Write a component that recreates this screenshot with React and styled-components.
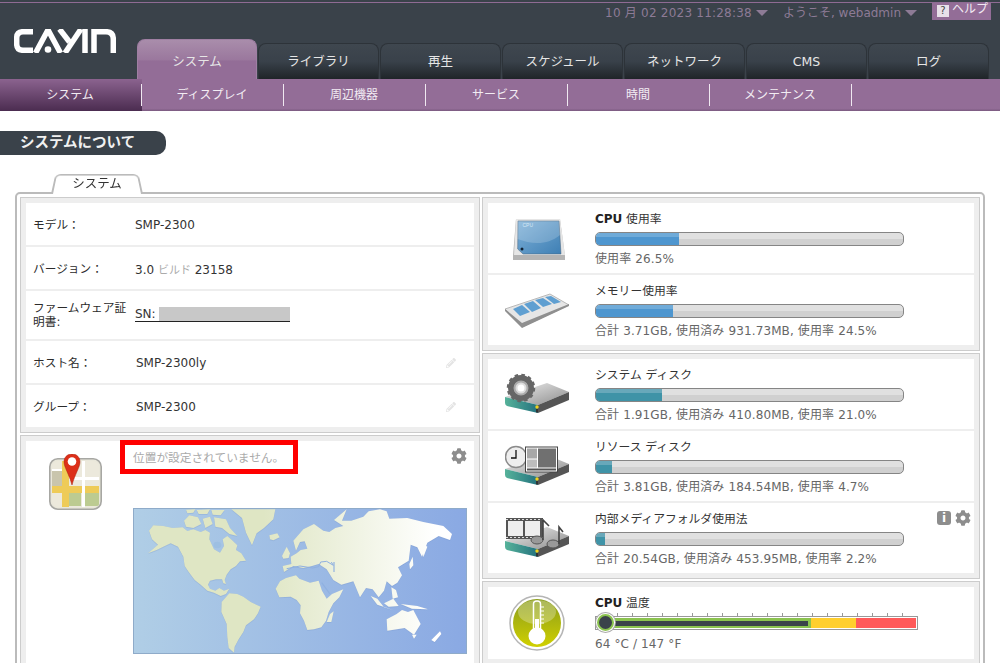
import styled, { createGlobalStyle } from 'styled-components';
import { FaCog, FaPencilAlt } from 'react-icons/fa';

const GlobalStyle = createGlobalStyle`
  html, body {
    margin: 0;
    height: 663px;
    overflow: hidden;
    background: #fff;
    font-family: 'DejaVu Sans', 'Noto Sans CJK JP', sans-serif;
    font-size: 12px;
    color: #333;
  }
`;

const mainTabs = ['システム', 'ライブラリ', '再生', 'スケジュール', 'ネットワーク', 'CMS', 'ログ'];
const subTabs = ['システム', 'ディスプレイ', '周辺機器', 'サービス', '時間', 'メンテナンス'];

function Logo() {
  return (
    <LogoMark viewBox='0 0 102 24' aria-label='CAYIN'>
      <g fill='none' stroke='#fff' strokeWidth='5.5'>
        <path d='M19 2.700H9Q2.700 2.700 2.700 9V15Q2.700 21.300 9 21.300H19' />
        <path d='M21.500 24L33 2.700H35L46.500 24' />
        <path d='M45.500 0L55.500 13' />
        <path d='M67 0L51 24' />
        <path d='M71 0V24' />
        <path d='M80 24V2.700H92Q99.300 2.700 99.300 10V24' />
      </g>
      <circle cx='34' cy='20.500' r='3.300' fill='#fff' />
    </LogoMark>
  );
}

function MapPinIcon() {
  return (
    <svg width='53' height='56' viewBox='0 0 53 56'>
      <rect x='0.800' y='4.800' width='51.400' height='50.400' rx='8' fill='#e9e7da' stroke='#a7a7a3' strokeWidth='1.600' />
      <rect x='3' y='7' width='47' height='46' rx='6' fill='#ece9dc' />
      <path d='M3 17H13V32H3Z' fill='#c9c5ad' />
      <path d='M20 39H32V52H20Z' fill='#bccb91' />
      <path d='M36 39H50V50Q50 52 47 52H36Z' fill='#bccb91' />
      <path d='M3 32H50V39H3Z M13 7H20V53H13Z' fill='#eecb58' />
      <path d='M3 15H13V17H3Z M33 7H36V53H33Z M20 23H50V26H20Z' fill='#fff' />
      <path d='M23 0C18 0 15 3.500 15 8C15 13 20 20 23 31C26 20 31 13 31 8C31 3.500 28 0 23 0Z' fill='#dc2f19' stroke='#a8200f' strokeWidth='0.500' />
      <circle cx='23' cy='7.500' r='4.300' fill='#fff' />
    </svg>
  );
}

function WorldMap() {
  return (
    <MapFrame>
      <svg width='332' height='144' viewBox='12 27 996 432' preserveAspectRatio='none'>
        <defs>
          <linearGradient id='sea' x1='0' x2='1' y1='0' y2='0'>
            <stop offset='0' stopColor='#b0cee6' />
            <stop offset='1' stopColor='#8aa9e3' />
          </linearGradient>
          <linearGradient id='land' gradientUnits='userSpaceOnUse' x1='400' x2='920' y1='0' y2='0'>
            <stop offset='0' stopColor='#dfe6c4' />
            <stop offset='1' stopColor='#ffffff' />
          </linearGradient>
          <filter id='glow' x='-5%' y='-5%' width='110%' height='110%'>
            <feDropShadow dx='0' dy='1' stdDeviation='2' floodColor='#6c8fc4' floodOpacity='0.7' />
          </filter>
        </defs>
        <rect x='12' y='27' width='996' height='432' fill='url(#sea)' />
        <g fill='url(#land)' filter='url(#glow)'>
          <path d='M57 92L70 76L100 78L128 84L158 82L172 93L190 88L212 96L226 90L240 98L238 118L252 148L270 158L282 138L278 118L292 108L308 122L322 136L318 150L334 160L348 182L330 184L318 198L302 208L290 224L284 240L288 252L280 250L276 238L258 238L240 242L234 254L240 266L256 272L268 264L282 272L298 266L288 282L272 288L252 278L232 272L212 254L194 240L176 216L164 198L160 170L144 140L122 130L100 140L80 150L54 160L84 134L66 118Z' />
          <path d='M168 29L196 28L190 38L172 40Z M200 30L240 28L232 42L206 42Z M244 30L284 30L272 46L248 44Z' />
          <path d='M162 62L178 46L204 52L214 72L190 84L168 80Z M218 56L240 50L248 72L226 84Z M252 52L288 58L300 84L322 108L298 102L276 84L256 80Z' />
          <path d='M304 28H436L430 58L402 84L380 100L366 136L348 98L336 54Z' />
          <path d='M418 106L442 100L449 112L430 121L420 118Z' />
          <path d='M275 306L298 280L322 282L340 290L362 306L392 320L384 340L372 358L348 376L340 396L326 418L314 440L312 458L296 444L292 412L290 372L274 336Z' />
          <path d='M437 266L450 244L468 234L498 226L508 236L540 248L566 242L576 272L590 296L606 282L640 268L628 292L610 310L596 336L588 362L574 382L552 388L532 390L522 362L510 340L512 316L500 300L482 290L448 292Z' />
          <path d='M600 342L611 334L604 366L590 366Z' />
          <path d='M462 216L458 198L484 192L482 170L500 160L512 150L532 146L524 124L510 126L498 152L490 122L520 88L552 72L580 92L598 96L616 84L640 78L612 60L650 28L636 62L664 62L700 50L716 34L750 28L770 34L778 56L832 54L880 66L940 78L966 102L960 120L926 108L892 128L876 170L862 142L842 134L836 182L804 202L816 226L802 248L786 258L770 244L762 272L746 292L728 268L708 264L690 292L670 244L634 254L610 240L590 208L566 192L546 198L520 204L490 198Z' />
          <path d='M456 168L470 140L480 160L476 174L460 176Z' />
          <path d='M722 288L742 296L762 322L790 330L742 314Z M762 310L790 296L806 318L776 320Z M812 312L862 318L894 328L846 326Z M784 262L798 270L804 292L788 296Z M838 192L848 170L850 196L840 208Z M876 130L892 140L880 172Z' />
          <path d='M770 358L800 342L816 330L834 336L850 330L872 372L852 404L824 384L772 392Z' />
          <path d='M904 420L930 394L934 402L914 426Z M846 404L860 404L852 416Z' />
        </g>
        <ellipse cx='262' cy='135' rx='12' ry='10' fill='#9dbfe2' />
        <path d='M470 206L510 198L548 204L566 200L572 186L590 184L610 196L604 186' fill='none' stroke='#8fb0e0' strokeWidth='3' />
        <path d='M575 248L600 282 M612 186V216' fill='none' stroke='#8fb0e0' strokeWidth='3.500' />
      </svg>
    </MapFrame>
  );
}

function CpuIcon() {
  return (
    <svg width='64' height='44' viewBox='0 0 64 44'>
      <defs>
        <linearGradient id='chip' x1='0' y1='0' x2='1' y2='1'>
          <stop offset='0' stopColor='#7fb1d8' />
          <stop offset='1' stopColor='#3e7fb4' />
        </linearGradient>
      </defs>
      <path d='M11 3H55L60 40V44H8V40Z' fill='#b4b4b4' />
      <path d='M11 3H55L60 39H9Z' fill='#e6e6e6' />
      <path d='M13 5H54L56 38H18L12.700 33Z' fill='url(#chip)' stroke='#44617a' strokeWidth='0.500' />
      <path d='M13 5H54L55 19C42 30 26 28 12.500 23Z' fill='#fff' opacity='0.18' />
      <circle cx='17' cy='33' r='1.500' fill='#123' />
      <text x='17.500' y='11' fontSize='5' fill='#d6e8f5' fontFamily='Liberation Sans, sans-serif'>CPU</text>
    </svg>
  );
}

function RamIcon() {
  return (
    <svg width='64' height='36' viewBox='0 0 64 36'>
      <path d='M0 17L45 2L64 13L17 35Z' fill='#e6e6e6' stroke='#a9a9a9' strokeWidth='0.800' />
      <path d='M0 17L17 31L64 12V14L17 36L0 19Z' fill='#8f8f8f' />
      <g fill='#5f9fd1'>
        <path d='M8 17L17 13L25 20L15 24Z' />
        <path d='M19 12L28 9L36 16L27 20Z' />
        <path d='M30 8L38 6L47 12L38 15Z' />
        <path d='M40 5L46 4L56 10L49 12Z' />
      </g>
    </svg>
  );
}

function DiskBase() {
  return (
    <>
      <path d='M0 24L42 10L64 19L33 32Z' fill='url(#diskTop)' />
      <path d='M0 24L33 32V40L2 33Q0 32 0 30Z' fill='url(#diskFront)' />
      <path d='M33 32L64 19V27L33 40Z' fill='#555' />
      <circle cx='32' cy='34' r='1.700' fill='#f2d21c' />
      <rect x='31' y='36' width='2' height='3.500' fill='#333' />
    </>
  );
}

function DiskDefs() {
  return (
    <svg width='0' height='0' style={{ position: 'absolute' }}>
      <defs>
        <linearGradient id='diskTop' x1='0' y1='0' x2='1' y2='1'>
          <stop offset='0' stopColor='#f0f0f0' />
          <stop offset='1' stopColor='#8d8d8d' />
        </linearGradient>
        <linearGradient id='diskFront' x1='0' y1='0' x2='1' y2='0'>
          <stop offset='0' stopColor='#56b29a' />
          <stop offset='1' stopColor='#24727e' />
        </linearGradient>
      </defs>
    </svg>
  );
}

function SystemDiskIcon() {
  return (
    <svg width='64' height='42' viewBox='0 0 64 42'>
      <DiskBase />
      <circle cx='16' cy='15' r='10' fill='none' stroke='#666' strokeWidth='6' />
      <circle cx='16' cy='15' r='12.500' fill='none' stroke='#666' strokeWidth='3.500' strokeDasharray='3.400 3.140' />
      <circle cx='16' cy='15' r='6.500' fill='#ddd' stroke='#aaa' strokeWidth='2' />
      <circle cx='16' cy='15' r='3.500' fill='#fff' />
    </svg>
  );
}

function ResourceDiskIcon() {
  return (
    <svg width='64' height='42' viewBox='0 0 64 42'>
      <DiskBase />
      <circle cx='11' cy='12' r='10.500' fill='#eee' stroke='#8b8b8b' strokeWidth='1.500' />
      <path d='M11 5V13H6' fill='none' stroke='#111' strokeWidth='1.300' />
      <rect x='20.500' y='2' width='32' height='25' fill='#fff' stroke='#444' />
      <rect x='22' y='3.500' width='10' height='10' fill='#a8a8a8' />
      <rect x='22' y='14.500' width='10' height='8' fill='#bdbdbd' />
      <rect x='33' y='3.500' width='18' height='19' fill='#707070' />
      <rect x='22' y='23.500' width='29' height='2' fill='#555' />
    </svg>
  );
}

function MediaDiskIcon() {
  return (
    <svg width='64' height='42' viewBox='0 0 64 42'>
      <DiskBase />
      <rect x='1' y='1' width='37' height='21' fill='#555' />
      <rect x='3' y='4' width='15' height='15' fill='#eee' />
      <rect x='20' y='4' width='15' height='15' fill='#eee' />
      <path d='M1 2.500H38 M1 20.500H38' stroke='#ddd' strokeWidth='1' strokeDasharray='2 2' />
      <ellipse cx='32' cy='23' rx='6' ry='4' fill='#999' stroke='#555' />
      <ellipse cx='48' cy='27' rx='6' ry='4' fill='#999' stroke='#555' />
      <path d='M38 23V3L44 9 M54 27V10L58 15' fill='none' stroke='#444' strokeWidth='1.600' />
    </svg>
  );
}

function ThermoIcon() {
  return (
    <svg width='56' height='56' viewBox='0 0 56 56'>
      <defs>
        <linearGradient id='lime' x1='0' y1='0' x2='0' y2='1'>
          <stop offset='0' stopColor='#8a9c1c' />
          <stop offset='1' stopColor='#d0d000' />
        </linearGradient>
      </defs>
      <circle cx='28' cy='28' r='27' fill='#fff' stroke='#b5b5b5' strokeWidth='1.500' />
      <circle cx='28' cy='28' r='24' fill='url(#lime)' />
      <ellipse cx='28' cy='17' rx='19' ry='12' fill='#fff' opacity='0.28' />
      <path d='M24.500 39V9Q24.500 6 28 6Q31.500 6 31.500 9V39' fill='none' stroke='#fff' strokeWidth='1.500' />
      <rect x='26' y='24' width='4' height='18' fill='#fff' />
      <circle cx='28' cy='41' r='8.500' fill='#fff' />
      <path d='M32 12H35M32 16H35M32 20H35M32 24H35M32 28H35' stroke='#fff' />
    </svg>
  );
}

const usageCards = [
  [
    { icon: <CpuIcon />, title: <><b>CPU</b> 使用率</>, value: 26.5, color: 'blue', note: '使用率 26.5%' },
    { icon: <RamIcon />, title: 'メモリー使用率', value: 24.5, color: 'blue', note: '合計 3.71GB, 使用済み 931.73MB, 使用率 24.5%' },
  ],
  [
    { icon: <SystemDiskIcon />, title: 'システム ディスク', value: 21, color: 'teal', note: '合計 1.91GB, 使用済み 410.80MB, 使用率 21.0%' },
    { icon: <ResourceDiskIcon />, title: 'リソース ディスク', value: 4.7, color: 'teal', note: '合計 3.81GB, 使用済み 184.54MB, 使用率 4.7%' },
    { icon: <MediaDiskIcon />, title: '内部メディアフォルダ使用法', value: 2.2, color: 'teal', note: '合計 20.54GB, 使用済み 453.95MB, 使用率 2.2%', actions: true },
  ],
];

function App() {
  return (
    <>
      <GlobalStyle />
      <DiskDefs />
      <Header>
        <TopLine />
        <HeaderBody>
          <Logo />
          <HeaderRight>
            <MetaBar>
              <MetaItem $wide>10 月 02 2023 11:28:38<Caret /></MetaItem>
              <MetaItem>ようこそ, webadmin<Caret /></MetaItem>
              <Help><HelpMark>?</HelpMark>ヘルプ</Help>
            </MetaBar>
            <MainTabs>
              {mainTabs.map((tab, i) => (
                <MainTab key={tab} $active={i === 0}>{tab}</MainTab>
              ))}
            </MainTabs>
          </HeaderRight>
        </HeaderBody>
      </Header>
      <SubNav>
        {subTabs.map((tab, i) => (
          <SubTab key={tab} $active={i === 0}>{tab}</SubTab>
        ))}
      </SubNav>

      <PageTitle>システムについて</PageTitle>
      <TabStrip>
        <PanelTab><span>システム</span></PanelTab>
      </TabStrip>

      <Panel>
        <Column>
          <Card>
            <InfoRow>
              <InfoLabel>モデル：</InfoLabel>
              <span>SMP-2300</span>
            </InfoRow>
            <InfoRow>
              <InfoLabel>バージョン：</InfoLabel>
              <span>3.0 <Faint>ビルド</Faint> 23158</span>
            </InfoRow>
            <InfoRow $tall>
              <InfoLabel>ファームウェア証明書:</InfoLabel>
              <Serial>SN: <Masked /></Serial>
            </InfoRow>
            <InfoRow>
              <InfoLabel>ホスト名：</InfoLabel>
              <EditableValue>SMP-2300ly</EditableValue>
              <EditIcon />
            </InfoRow>
            <InfoRow>
              <InfoLabel>グループ：</InfoLabel>
              <EditableValue>SMP-2300</EditableValue>
              <EditIcon />
            </InfoRow>
          </Card>
          <Card>
            <LocationBody>
              <LocationIcon><MapPinIcon /></LocationIcon>
              <LocationMain>
                <Notice>位置が設定されていません。</Notice>
                <WorldMap />
              </LocationMain>
              <CornerGear />
            </LocationBody>
          </Card>
        </Column>

        <Column>
          {usageCards.map((rows, i) => (
            <Card key={i}>
              {rows.map((row) => (
                <UsageRow key={row.note}>
                  <UsageIcon>{row.icon}</UsageIcon>
                  <div>
                    <UsageTitle>{row.title}</UsageTitle>
                    <Bar>
                      <BarFill $color={row.color} $value={row.value} />
                    </Bar>
                    <UsageNote>{row.note}</UsageNote>
                  </div>
                  {row.actions && (
                    <RowActions>
                      <InfoBadge>i</InfoBadge>
                      <FaCog size={16} />
                    </RowActions>
                  )}
                </UsageRow>
              ))}
            </Card>
          ))}
          <Card>
            <UsageRow $temp>
              <UsageIcon><ThermoIcon /></UsageIcon>
              <div>
                <UsageTitle><b>CPU</b> 温度</UsageTitle>
                <Meter>
                  <MeterGreen><MeterLevel /></MeterGreen>
                  <MeterYellow />
                  <MeterRed />
                  <MeterKnob />
                </Meter>
                <TempNote>64 °C / 147 °F</TempNote>
              </div>
            </UsageRow>
          </Card>
        </Column>
      </Panel>
    </>
  );
}

const Header = styled.header`
  height: 79px;
  background: #3a424a;
`;

const TopLine = styled.div`
  height: 1px;
  border-top: 2px solid #3a424a;
  background: #8f6b94;
`;

const HeaderBody = styled.div`
  display: flex;
  height: 76px;
`;

const LogoMark = styled.svg`
  flex: none;
  width: 102px;
  height: 24px;
  margin: 26px 21px 0 14px;
`;

const HeaderRight = styled.div`
  flex: 1;
  display: flex;
  flex-direction: column;
`;

const MetaBar = styled.div`
  height: 36px;
  display: flex;
  align-items: flex-start;
  justify-content: flex-end;
  padding-right: 9px;
  color: #8d7b96;
  font-size: 12px;
  line-height: 18px;
`;

const MetaItem = styled.div`
  display: flex;
  align-items: center;
  margin-right: 15px;
  padding-top: 1px;
  letter-spacing: ${(p) => (p.$wide ? '0.22px' : '0')};
`;

const Caret = styled.i`
  width: 0;
  height: 0;
  margin-left: 4px;
  border: 6px solid transparent;
  border-top: 6px solid #8d7b96;
  border-bottom: 0;
`;

const Help = styled.div`
  display: flex;
  align-items: flex-start;
  width: 59px;
  height: 17px;
  box-sizing: border-box;
  padding: 0 0 0 5px;
  background: #936d97;
  color: #f1e9f2;
  font-size: 12px;
  line-height: 13px;
`;

const HelpMark = styled.span`
  width: 12px;
  height: 12px;
  margin: 2px 3px 0 0;
  background: #e8e0e9;
  color: #444;
  font-size: 10px;
  line-height: 12px;
  text-align: center;
`;

const MainTabs = styled.nav`
  display: flex;
  align-items: flex-end;
  height: 40px;
`;

const MainTab = styled.div`
  box-sizing: border-box;
  flex: none;
  width: ${(p) => (p.$active ? '120px' : '121px')};
  height: ${(p) => (p.$active ? '40px' : '36px')};
  margin-right: 1px;
  border-radius: 8px 8px 0 0;
  text-align: center;
  font-size: 12.500px;
  line-height: ${(p) => (p.$active ? '44px' : '36px')};
  color: #e6e6e6;
  border: 1px solid ${(p) => (p.$active ? '#9f7fa3' : '#2d3339')};
  border-bottom: 0;
  background: ${(p) =>
    p.$active
      ? 'linear-gradient(#a98dab, #9a779d 52%, #936d97 53%, #936d97)'
      : 'linear-gradient(#3f474f, #39414a 50%, #1f2428)'};
`;

const SubNav = styled.nav`
  display: flex;
  height: 32px;
  background: linear-gradient(#936d97 92%, #7b5a80);
`;

const SubTab = styled.div`
  position: relative;
  box-sizing: border-box;
  width: 142px;
  padding-right: 2px;
  text-align: center;
  font-size: 12px;
  line-height: 32px;
  color: #f2ecf3;
  background: ${(p) => (p.$active ? 'linear-gradient(#8b638f, #4b2c50)' : 'transparent')};
  &::after {
    content: '';
    position: absolute;
    right: 0;
    top: 5px;
    height: 22px;
    width: 1px;
    background: #f0e9f1;
  }
`;

const PageTitle = styled.h1`
  width: 146px;
  height: 24px;
  margin: 20px 0 0;
  padding-left: 20px;
  border-radius: 0 10px 10px 0;
  background: #3a424a;
  color: #f1f1f1;
  font-size: 14.500px;
  font-weight: bold;
  line-height: 23px;
`;

const TabStrip = styled.div`
  height: 20px;
  margin-top: 17px;
  padding-left: 51px;
`;

const PanelTab = styled.div`
  position: relative;
  z-index: 1;
  width: 92px;
  height: 22px;
  text-align: center;
  font-size: 12.500px;
  line-height: 23px;
  span {
    position: relative;
  }
  &::before {
    content: '';
    position: absolute;
    inset: -1px 0 0;
    box-sizing: border-box;
    background: #fff;
    border: 2px solid #bbb;
    border-bottom: 0;
    border-radius: 6px 6px 0 0;
    transform: perspective(60px) rotateX(16deg);
    transform-origin: bottom;
  }
`;

const Panel = styled.main`
  display: grid;
  grid-template-columns: 460px 498px;
  gap: 2px;
  align-items: start;
  box-sizing: border-box;
  width: 970px;
  margin-left: 15px;
  padding: 3px;
  border: 2px solid #bbb;
  border-radius: 5px 5px 0 0;
`;

const Column = styled.div`
  display: flex;
  flex-direction: column;
  gap: 2px;
`;

const Card = styled.section`
  display: flex;
  flex-direction: column;
  gap: 2px;
  padding: 5px;
  background: #eee;
  border: 1px solid #ccc;
`;

const InfoRow = styled.div`
  position: relative;
  display: flex;
  align-items: center;
  box-sizing: border-box;
  height: ${(p) => (p.$tall ? '48px' : '42px')};
  padding: ${(p) => (p.$tall ? '0' : '2px')} 0 0 7px;
  background: #fff;
`;

const InfoLabel = styled.div`
  flex: none;
  width: 97px;
  margin-right: 5px;
  color: #2b2b2b;
  line-height: 14px;
  font-size: 11.700px;
`;

const Faint = styled.span`
  color: #aaa;
  font-size: 11px;
`;

const Serial = styled.span`
  display: flex;
  align-items: flex-end;
  gap: 3px;
  height: 14px;
  margin-top: -1px;
  border-bottom: 1px solid #222;
  line-height: 13px;
`;

const Masked = styled.span`
  width: 131px;
  height: 14px;
  background: #c8c8c8;
`;

const EditableValue = styled.span`
  margin-left: 1px;
`;

const EditIcon = styled(FaPencilAlt)`
  position: absolute;
  right: 18px;
  top: 17px;
  width: 10px;
  height: 10px;
  color: #e4e4e4;
`;

const LocationBody = styled.div`
  position: relative;
  display: flex;
  height: 222px;
  background: #fff;
`;

const LocationIcon = styled.div`
  flex: none;
  width: 94px;
  box-sizing: border-box;
  padding: 13px 0 0 23px;
`;

const LocationMain = styled.div`
  display: flex;
  flex-direction: column;
  align-items: flex-start;
`;

const Notice = styled.div`
  box-sizing: border-box;
  width: 178px;
  height: 34px;
  margin-top: -1px;
  padding-left: 8px;
  border: 5px solid #f00;
  color: #aaa;
  font-size: 11.700px;
  line-height: 26px;
  white-space: nowrap;
`;

const MapFrame = styled.div`
  box-sizing: border-box;
  width: 334px;
  height: 146px;
  margin: 34px 0 0 13px;
  border: 1px solid #8fabc9;
  svg {
    display: block;
  }
`;

const CornerGear = styled(FaCog)`
  position: absolute;
  right: 7px;
  top: 7px;
  width: 16px;
  height: 16px;
  color: #8d8d8d;
`;

const UsageRow = styled.div`
  position: relative;
  display: flex;
  align-items: flex-start;
  height: ${(p) => (p.$temp ? '72px' : '70px')};
  box-sizing: border-box;
  padding-top: 7px;
  background: #fff;
`;

const UsageIcon = styled.div`
  flex: none;
  align-self: center;
  display: flex;
  justify-content: center;
  width: 98px;
  margin: -7px 9px 0 0;
  svg {
    display: block;
  }
`;

const UsageTitle = styled.div`
  height: 16px;
  line-height: 18px;
  color: #333;
  font-size: 11.800px;
  white-space: nowrap;
  b {
    color: #222;
    font-size: 12px;
  }
`;

const Bar = styled.div`
  box-sizing: border-box;
  width: 309px;
  height: 14px;
  margin-top: 6px;
  overflow: hidden;
  border: 1px solid #858585;
  border-radius: 5px;
  background: linear-gradient(#e0e0e0 50%, #d0d0d0 50%);
`;

const BarFill = styled.div`
  height: 100%;
  width: calc(${(p) => p.$value}% + 2px);
  background: ${(p) =>
    p.$color === 'teal'
      ? 'linear-gradient(#68a8ba 35%, #3f93a7 35%)'
      : 'linear-gradient(#6fabd9 35%, #4e96cf 35%)'};
`;

const UsageNote = styled.div`
  margin-top: 5px;
  color: #666;
  font-size: 12px;
  letter-spacing: 0.12px;
  line-height: 16px;
  white-space: nowrap;
`;

const TempNote = styled(UsageNote)`
  margin-top: 6px;
`;

const RowActions = styled.div`
  position: absolute;
  top: 7px;
  right: 3px;
  display: flex;
  align-items: center;
  gap: 4px;
  color: #8d8d8d;
`;

const InfoBadge = styled.span`
  width: 14px;
  height: 14px;
  border-radius: 3px;
  background: #8d8d8d;
  color: #fff;
  font-size: 12px;
  font-weight: bold;
  line-height: 14px;
  text-align: center;
`;

const Meter = styled.div`
  position: relative;
  display: flex;
  box-sizing: border-box;
  width: 323px;
  height: 14px;
  margin-top: 6px;
  padding: 1px;
  background: #fff;
  border: 1px solid #999;
  &::before {
    content: '';
    position: absolute;
    left: 21px;
    top: -4px;
    width: 286px;
    height: 3px;
    background: repeating-linear-gradient(90deg, #999 0 1px, transparent 1px 15px);
  }
`;

const MeterGreen = styled.div`
  flex: none;
  box-sizing: border-box;
  width: 214px;
  padding-top: 3px;
  background: #8bc34f;
`;

const MeterLevel = styled.div`
  width: 211px;
  height: 5px;
  background: #3a424a;
`;

const MeterYellow = styled.div`
  flex: none;
  width: 45px;
  background: #ffcf2e;
`;

const MeterRed = styled.div`
  flex: 1;
  background: #ff5a5a;
`;

const MeterKnob = styled.span`
  position: absolute;
  left: 1px;
  top: -3px;
  box-sizing: border-box;
  width: 17px;
  height: 17px;
  border-radius: 50%;
  background: #3a424a;
  border: 2px solid #8bc34f;
  box-shadow: 0 0 0 1px #fff, 0 0 0 2px #aaa;
`;

export default App;
